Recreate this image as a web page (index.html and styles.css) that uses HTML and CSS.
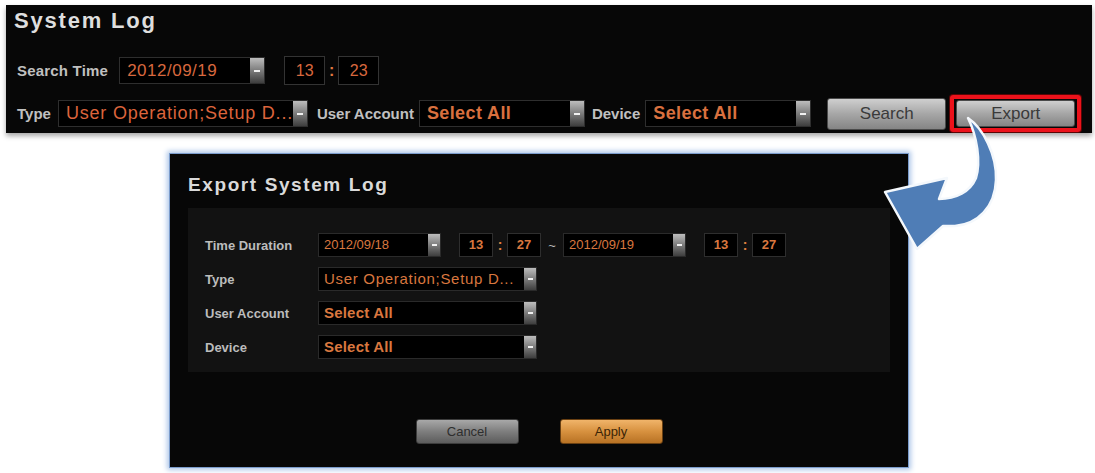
FILE: index.html
```html
<!DOCTYPE html>
<html>
  <head>
    <meta charset="utf-8" />
    <title>System Log</title>
    <link rel="stylesheet" href="styles.css">
  </head>
  <body>
    <div class="page">
      <div class="log-bar">
        <h1>System Log</h1>
        <div class="bar-row row-time">
          <span class="lbl">Search Time</span>
          <div class="combo c-date"><span class="val">2012/09/19</span><span class="drop"></span></div>
          <span class="tbox">13</span><span class="colon">:</span><span class="tbox">23</span>
        </div>
        <div class="bar-row row-filter">
          <span class="lbl">Type</span>
          <div class="combo c-type"><span class="val">User Operation;Setup D...</span><span class="drop"></span></div>
          <span class="lbl lbl-ua">User Account</span>
          <div class="combo c-sel"><span class="val strong">Select All</span><span class="drop"></span></div>
          <span class="lbl lbl-dev">Device</span>
          <div class="combo c-sel"><span class="val strong">Select All</span><span class="drop"></span></div>
          <button class="btn btn-search">Search</button>
          <div class="export-ring"><button class="btn btn-export">Export</button></div>
        </div>
      </div>

      <div class="dialog">
        <h2>Export System Log</h2>
        <div class="dlg-form">
          <div class="frow">
            <span class="flbl">Time Duration</span>
            <div class="dcombo d-date"><span class="dval">2012/09/18</span><span class="drop small"></span></div>
            <span class="dtbox first">13</span><span class="dcolon">:</span><span class="dtbox">27</span>
            <span class="tilde">~</span>
            <div class="dcombo d-date"><span class="dval">2012/09/19</span><span class="drop small"></span></div>
            <span class="dtbox first">13</span><span class="dcolon">:</span><span class="dtbox">27</span>
          </div>
          <div class="frow">
            <span class="flbl">Type</span>
            <div class="dcombo d-wide"><span class="dval big">User Operation;Setup D...</span><span class="drop small"></span></div>
          </div>
          <div class="frow">
            <span class="flbl">User Account</span>
            <div class="dcombo d-wide"><span class="dval strong">Select All</span><span class="drop small"></span></div>
          </div>
          <div class="frow">
            <span class="flbl">Device</span>
            <div class="dcombo d-wide"><span class="dval strong">Select All</span><span class="drop small"></span></div>
          </div>
        </div>
        <div class="dlg-actions">
          <button class="dbtn cancel">Cancel</button>
          <button class="dbtn apply">Apply</button>
        </div>
      </div>

      <svg class="arrow" width="140" height="150" viewBox="0 0 140 150">
        <path d="M98,8 C113,18 127,45 126,70 C125,97 108,114 85,116 L73,116 L47,139 L15,82 L77,68 L69,89 C86,89 100,82 106,68 C111,52 107,26 98,8 Z"
              fill="#4f7db6" stroke="#f4f8fc" stroke-width="2.5" stroke-linejoin="round" />
      </svg>
    </div>
  </body>
</html>
```

FILE: styles.css
```css
body {
  margin: 0;
  background: #fff;
  font-family: "Liberation Sans", Arial, sans-serif;
}

.page {
  position: relative;
  width: 1095px;
  height: 473px;
  overflow: hidden;
}

/* top bar */

.log-bar {
  margin: 5px 3px 0 6px;
  height: 128px;
  box-sizing: border-box;
  padding: 2px 10px 0 11px;
  background: #070707;
  box-shadow: 0 3px 5px rgba(0, 0, 0, 0.35);
}

.log-bar h1 {
  margin: 0 0 0 -3px;
  font-size: 22px;
  line-height: 27px;
  letter-spacing: 1.8px;
  color: #dedede;
}

.bar-row {
  display: flex;
  align-items: center;
  height: 27px;
}

.row-time {
  margin-top: 23px;
}

.row-filter {
  margin-top: 16px;
}

.lbl {
  font-size: 15px;
  font-weight: bold;
  color: #c0c0c0;
}

.row-time .lbl {
  letter-spacing: 0.2px;
}

.combo {
  display: flex;
  height: 27px;
  box-sizing: border-box;
  border: 1px solid #2e2e2e;
  background: #000;
}

.val {
  flex: 1;
  padding-left: 7px;
  line-height: 25px;
  font-size: 18px;
  letter-spacing: 0.8px;
  color: #dc643c;
  white-space: nowrap;
  overflow: hidden;
}

.val.strong {
  font-size: 18px;
  font-weight: bold;
  letter-spacing: 0.4px;
  color: #d9703f;
}

.c-date {
  width: 146px;
  margin-left: 11px;
}

.c-date .val {
  font-size: 17px;
  letter-spacing: 0.5px;
  color: #d8683e;
}

.c-type {
  width: 250px;
  margin-left: 7px;
}

.c-sel {
  width: 166px;
  margin-left: 5px;
}

.lbl-ua {
  margin-left: 9px;
}

.lbl-dev {
  margin-left: 7px;
}

.drop {
  width: 14px;
  display: flex;
  align-items: center;
  justify-content: center;
  background: linear-gradient(#bdbdbd, #7c7c7c 50%, #3e3e3e);
}

.drop::after {
  content: "";
  width: 6px;
  height: 2px;
  background: #f0f0f0;
}

.drop.small {
  width: 12px;
}

.drop.small::after {
  width: 5px;
}

.tbox {
  width: 41px;
  height: 29px;
  box-sizing: border-box;
  border: 1px solid #333;
  background: #000;
  text-align: center;
  line-height: 27px;
  font-size: 16px;
  color: #d8683e;
}

.row-time .tbox:nth-of-type(2) {
  margin-left: 19px;
}

.colon {
  width: 13px;
  text-align: center;
  font-size: 16px;
  font-weight: bold;
  color: #e07a40;
}

.btn {
  border: 1px solid #4a4a4a;
  border-radius: 3px;
  padding: 0;
  background: linear-gradient(#cfcfcf, #a6a6a6 50%, #858585);
  font-family: "Liberation Sans", Arial, sans-serif;
  font-size: 17px;
  color: #3a3a3a;
}

.btn-search {
  width: 119px;
  height: 32px;
  margin-left: 16px;
}

.export-ring {
  margin-left: 4px;
  width: 131px;
  height: 37px;
  box-sizing: border-box;
  border: 4px solid #ec121b;
  border-radius: 3px;
  box-shadow: 0 0 0 1px #5a0505;
  display: flex;
}

.btn-export {
  flex: 1;
  margin: 1px 2px;
}

/* export dialog */

.dialog {
  margin: 21px 0 0 170px;
  width: 738px;
  height: 313px;
  box-sizing: border-box;
  padding: 0 18px;
  background: #070707;
  box-shadow: 0 0 0 1px #7b9ccc, 0 0 5px 3px #b0c8e9;
}

.dialog h2 {
  margin: 0;
  padding-top: 20px;
  font-size: 19px;
  line-height: 22px;
  letter-spacing: 1.6px;
  color: #dadada;
}

.dlg-form {
  margin-top: 12px;
  height: 164px;
  box-sizing: border-box;
  padding: 25px 0 0 17px;
  background: #121212;
  display: flex;
  flex-direction: column;
  gap: 10px;
}

.frow {
  display: flex;
  align-items: center;
  height: 24px;
}

.flbl {
  width: 113px;
  font-size: 13px;
  font-weight: bold;
  color: #bcbcbc;
}

.dcombo {
  display: flex;
  height: 24px;
  box-sizing: border-box;
  border: 1px solid #2a2a2a;
  background: #000;
}

.d-date {
  width: 123px;
}

.d-wide {
  width: 219px;
}

.dval {
  flex: 1;
  padding-left: 5px;
  line-height: 22px;
  font-size: 13px;
  color: #d9773f;
  white-space: nowrap;
  overflow: hidden;
}

.dval.big {
  font-size: 15px;
  letter-spacing: 0.7px;
}

.dval.strong {
  font-size: 15px;
  font-weight: bold;
  letter-spacing: 0.2px;
}

.dtbox {
  width: 34px;
  height: 24px;
  box-sizing: border-box;
  border: 1px solid #2e2e2e;
  background: #000;
  text-align: center;
  line-height: 22px;
  font-size: 13px;
  font-weight: bold;
  color: #d9773f;
}

.dtbox.first {
  margin-left: 18px;
}

.dcolon {
  width: 14px;
  text-align: center;
  font-size: 14px;
  font-weight: bold;
  color: #e08040;
}

.tilde {
  width: 22px;
  text-align: center;
  font-size: 13px;
  color: #bbb;
}

.dlg-actions {
  display: flex;
  justify-content: center;
  gap: 41px;
  margin-top: 47px;
}

.dbtn {
  width: 103px;
  height: 25px;
  padding: 0;
  border-radius: 3px;
  font-family: "Liberation Sans", Arial, sans-serif;
  font-size: 13px;
}

.cancel {
  border: 1px solid #3c3c3c;
  background: linear-gradient(#a8a8a8, #7e7e7e 50%, #5c5c5c);
  color: #2e2e2e;
}

.apply {
  border: 1px solid #6a4012;
  background: linear-gradient(#f0b46a, #d7913f 50%, #b87224);
  color: #3a2406;
}

.arrow {
  position: absolute;
  left: 870px;
  top: 110px;
}
```
